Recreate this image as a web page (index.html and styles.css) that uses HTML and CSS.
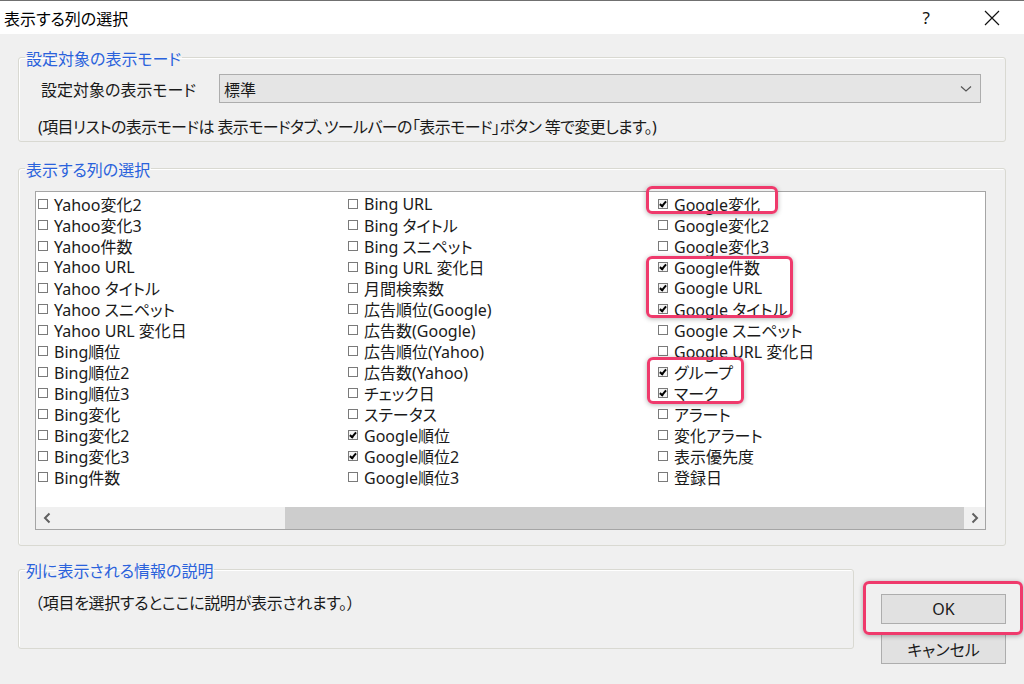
FILE: index.html
```
<!DOCTYPE html>
<html lang="ja">

<head>
    <meta charset="UTF-8">
    <title>表示する列の選択</title>
    <link rel="stylesheet" href="styles.css">
</head>

<body>
    <div class="titlebar">
        <span class="title">表示する列の選択</span>
        <div class="title-buttons">
            <span class="help">?</span>
            <svg class="close" width="16" height="16" viewBox="0 0 16 16">
                <path d="M1 1 L15 15 M15 1 L1 15" stroke="#111" stroke-width="1.2" fill="none" />
            </svg>
        </div>
    </div>

    <div class="dialog">
        <fieldset class="group mode-group">
            <legend>設定対象の表示モード</legend>
            <div class="mode-row">
                <span class="mode-label">設定対象の表示モード</span>
                <div class="select">
                    <span>標準</span>
                    <svg width="12" height="8" viewBox="0 0 12 8">
                        <path d="M1 1.5 L6 6 L11 1.5" stroke="#555" stroke-width="1.2" fill="none" />
                    </svg>
                </div>
            </div>
            <p class="note">(項目リストの表示モードは 表示モードタブ、ツールバーの「表示モード」ボタン 等で変更します。)</p>
        </fieldset>

        <fieldset class="group columns-group">
            <legend>表示する列の選択</legend>
            <div class="listbox">
                <ul class="col-list">
                    <li><span class="cb"></span>Yahoo変化2</li>
                    <li><span class="cb"></span>Yahoo変化3</li>
                    <li><span class="cb"></span>Yahoo件数</li>
                    <li><span class="cb"></span>Yahoo URL</li>
                    <li><span class="cb"></span>Yahoo タイトル</li>
                    <li><span class="cb"></span>Yahoo スニペット</li>
                    <li><span class="cb"></span>Yahoo URL 変化日</li>
                    <li><span class="cb"></span>Bing順位</li>
                    <li><span class="cb"></span>Bing順位2</li>
                    <li><span class="cb"></span>Bing順位3</li>
                    <li><span class="cb"></span>Bing変化</li>
                    <li><span class="cb"></span>Bing変化2</li>
                    <li><span class="cb"></span>Bing変化3</li>
                    <li><span class="cb"></span>Bing件数</li>

                    <li><span class="cb"></span>Bing URL</li>
                    <li><span class="cb"></span>Bing タイトル</li>
                    <li><span class="cb"></span>Bing スニペット</li>
                    <li><span class="cb"></span>Bing URL 変化日</li>
                    <li><span class="cb"></span>月間検索数</li>
                    <li><span class="cb"></span>広告順位(Google)</li>
                    <li><span class="cb"></span>広告数(Google)</li>
                    <li><span class="cb"></span>広告順位(Yahoo)</li>
                    <li><span class="cb"></span>広告数(Yahoo)</li>
                    <li><span class="cb"></span>チェック日</li>
                    <li><span class="cb"></span>ステータス</li>
                    <li><span class="cb on"></span>Google順位</li>
                    <li><span class="cb on"></span>Google順位2</li>
                    <li><span class="cb"></span>Google順位3</li>

                    <li><span class="cb on"></span>Google変化</li>
                    <li><span class="cb"></span>Google変化2</li>
                    <li><span class="cb"></span>Google変化3</li>
                    <li><span class="cb on"></span>Google件数</li>
                    <li><span class="cb on"></span>Google URL</li>
                    <li><span class="cb on"></span>Google タイトル</li>
                    <li><span class="cb"></span>Google スニペット</li>
                    <li><span class="cb"></span>Google URL 変化日</li>
                    <li><span class="cb on"></span>グループ</li>
                    <li><span class="cb on"></span>マーク</li>
                    <li><span class="cb"></span>アラート</li>
                    <li><span class="cb"></span>変化アラート</li>
                    <li><span class="cb"></span>表示優先度</li>
                    <li><span class="cb"></span>登録日</li>
                </ul>
                <div class="hscroll">
                    <span class="arrow">
                        <svg width="8" height="12" viewBox="0 0 8 12">
                            <path d="M6.5 1.5 L2 6 L6.5 10.5" stroke="#606060" stroke-width="2" fill="none" />
                        </svg>
                    </span>
                    <div class="track"><div class="thumb"></div></div>
                    <span class="arrow">
                        <svg width="8" height="12" viewBox="0 0 8 12">
                            <path d="M1.5 1.5 L6 6 L1.5 10.5" stroke="#606060" stroke-width="2" fill="none" />
                        </svg>
                    </span>
                </div>
            </div>
        </fieldset>

        <div class="bottom-row">
            <fieldset class="group info-group">
                <legend>列に表示される情報の説明</legend>
                <p class="info-text">（項目を選択するとここに説明が表示されます。）</p>
            </fieldset>
            <div class="buttons">
                <button type="button" class="btn">OK</button>
                <button type="button" class="btn">キャンセル</button>
            </div>
        </div>
    </div>

    <!-- annotation marks -->
    <div class="mark mark-1"></div>
    <div class="mark mark-2"></div>
    <div class="mark mark-3"></div>
    <div class="mark mark-4"></div>
</body>

</html>
```

FILE: styles.css
```
body {
    margin: 0;
    width: 1024px;
    height: 684px;
    overflow: hidden;
    position: relative;
    background-color: #f0f0f0;
    font-family: "Noto Sans", "Noto Sans CJK JP", sans-serif;
    font-size: 16px;
    font-feature-settings: "palt";
    color: #1a1a1a;
}

.titlebar {
    height: 33px;
    border-top: 1px solid #707070;
    background: #fff;
    display: flex;
    align-items: center;
    justify-content: space-between;
    padding-left: 4px;
}

.title {
    color: #000;
}

.title-buttons {
    display: flex;
    align-items: center;
}

.help {
    font-size: 17px;
    color: #111;
    margin-right: 54px;
}

.close {
    margin-right: 24px;
}

.dialog {
    padding: 0 18px;
}

.group {
    margin: 0;
    padding: 0 6px;
    border: 1px solid #d9d9d2;
    border-radius: 3px;
    box-shadow: inset 1px 1px 0 #fff;
    min-width: 0;
}

.group legend {
    padding: 0 1px;
    line-height: 18px;
    color: #2a62dc;
    position: relative;
    top: 2px;
}

.mode-group {
    margin-top: 14px;
    padding-bottom: 4px;
}

.mode-row {
    display: flex;
    align-items: center;
    margin: 8px 18px 0 16px;
}

.mode-label {
    width: 178px;
}

.select {
    flex: 1;
    height: 27px;
    border: 1px solid #adadad;
    background: #e5e5e5;
    display: flex;
    align-items: center;
    justify-content: space-between;
    padding: 0 8px 0 4px;
}

.note {
    margin: 14px 0 0 13px;
    line-height: 20px;
    letter-spacing: -0.6px;
}

.columns-group {
    margin-top: 17px;
    padding-bottom: 15px;
}

.listbox {
    margin: 14px 13px 0 10px;
    height: 337px;
    border: 1px solid #a5a5a5;
    background: #fff;
    display: flex;
    flex-direction: column;
    overflow: hidden;
}

.col-list {
    list-style: none;
    margin: 0;
    padding: 1px 0 0 2px;
    flex: 1;
    display: grid;
    grid-auto-flow: column;
    grid-template-rows: repeat(14, 21px);
    grid-auto-columns: 310px;
    align-content: start;
}

.col-list li {
    display: flex;
    align-items: center;
    white-space: nowrap;
}

.cb {
    position: relative;
    width: 8px;
    height: 8px;
    border: 1px solid #7a7a7a;
    background: #fff;
    margin-right: 6px;
    flex: none;
}

.cb.on {
    background: #f4f4f4;
}

.cb.on::after {
    content: "";
    position: absolute;
    left: 2px;
    top: 0;
    width: 2px;
    height: 5px;
    border: solid #000;
    border-width: 0 2px 2px 0;
    transform: rotate(40deg);
}

.hscroll {
    height: 22px;
    background: #f0f0f0;
    display: flex;
}

.hscroll .arrow {
    width: 21px;
    display: flex;
    align-items: center;
    justify-content: center;
}

.track {
    flex: 1;
    display: flex;
    padding: 0 0 0 228px;
}

.thumb {
    flex: 1;
    background: #cdcdcd;
}

.bottom-row {
    display: flex;
    margin-top: 14px;
}

.info-group {
    width: 822px;
    height: 87px;
}

.info-text {
    margin: 15px 0 0 10px;
    line-height: 20px;
    letter-spacing: -0.3px;
}

.buttons {
    margin-left: 27px;
    padding-top: 34px;
    display: flex;
    flex-direction: column;
    gap: 10px;
}

.btn {
    width: 125px;
    height: 30px;
    border: 1px solid #adadad;
    background: #e1e1e1;
    font-family: inherit;
    font-size: 16px;
    font-feature-settings: "palt";
    color: #1a1a1a;
    padding: 0;
}

.mark {
    position: absolute;
    border: 3px solid #ef3a6c;
    border-radius: 6px;
    box-shadow: 0 1px 5px rgba(0, 0, 0, 0.3);
}

.mark-1 {
    left: 646px;
    top: 186px;
    width: 126px;
    height: 22px;
}

.mark-2 {
    left: 646px;
    top: 256px;
    width: 141px;
    height: 56px;
}

.mark-3 {
    left: 647px;
    top: 357px;
    width: 91px;
    height: 41px;
}

.mark-4 {
    left: 863px;
    top: 581px;
    width: 154px;
    height: 48px;
}
```
